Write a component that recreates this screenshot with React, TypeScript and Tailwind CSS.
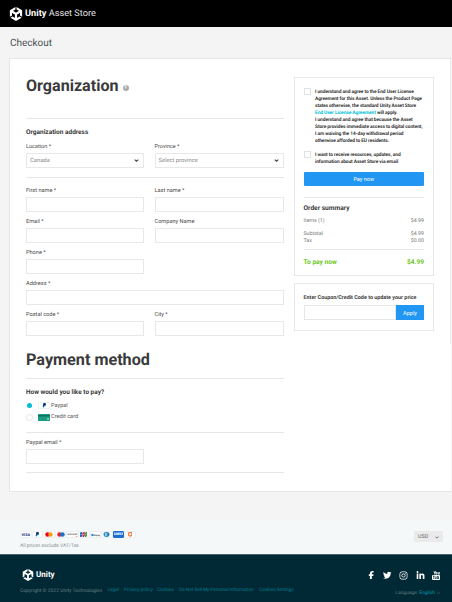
import React from 'react';
import { FaUnity, FaFacebookF, FaTwitter, FaInstagram, FaLinkedinIn } from 'react-icons/fa6';

function Chevron({ className = '' }: { className?: string }) {
  return (
    <svg viewBox="0 0 8 5" className={className} fill="none" stroke="currentColor" strokeWidth="1.8">
      <path d="M1 1l3 2.7L7 1" />
    </svg>
  );
}

function Field({ label, wide = '' }: { label: string; wide?: string }) {
  return (
    <div className={`h-[31px] ${wide}`}>
      <div className="h-3 pt-px text-[5.6px] leading-[11px] text-[#4c4c4c]">{label}</div>
      <div className="h-[15px] border border-[#e8e8e8] bg-white" />
    </div>
  );
}

function SelectField({ label, value }: { label: string; value: string }) {
  return (
    <div>
      <div className="h-[13px] pt-px text-[5.5px] leading-3 text-[#4c4c4c]">{label}</div>
      <div className="flex h-[15px] items-center justify-between border border-[#e8e8e8] pr-1 pl-[3px] text-[5.8px] text-[#888]">
        <span className="pt-px">{value}</span>
        <Chevron className="h-[3px] w-[5px] text-[#444]" />
      </div>
    </div>
  );
}

function Row({ label, price }: { label: string; price: string }) {
  return (
    <div className="flex h-[7px] items-center justify-between text-[5.25px] leading-[7px] text-[#777]">
      <span>{label}</span>
      <span>{price}</span>
    </div>
  );
}

function PayPal({ className = '' }: { className?: string }) {
  return (
    <svg viewBox="0 0 10 12" className={className}>
      <path d="M3 2h4.5c2 .5 2 5-1.5 5.500H4.500L4 11H1.500z" fill="#179bd7" />
      <path d="M2.500 0H6c4 .2 3 6-1 6H3.500L3 9H.5z" fill="#193276" />
    </svg>
  );
}

function Badge({ children, blue = false }: { children: React.ReactNode; blue?: boolean }) {
  return (
    <div className={`flex h-[7px] w-[11.6px] items-center justify-center overflow-hidden rounded-[1px] border ${blue ? 'border-[#1b6fd0] bg-[#1b6fd0]' : 'border-[#edf0f3] bg-white'}`}>
      {children}
    </div>
  );
}

function Circles({ left, right }: { left: string; right: string }) {
  return (
    <svg viewBox="0 0 16 10" className="h-[5px] w-2 shrink-0">
      <circle cx="5" cy="5" r="4.500" fill={left} />
      <circle cx="11" cy="5" r="4.500" fill={right} />
    </svg>
  );
}

function PaymentBadges() {
  return (
    <div className="flex h-[7px] w-[116px]">
      <Badge><span className="text-[3.800px] font-black text-[#273b86] italic">VISA</span></Badge>
      <Badge><PayPal className="h-[5px] w-[5px]" /></Badge>
      <Badge><Circles left="#eb001b" right="#f79e1b" /></Badge>
      <Badge><Circles left="#e32129" right="#1574c4" /></Badge>
      <Badge>
        <svg viewBox="0 0 22 14" className="h-[7px] w-[11px] shrink-0">
          <path d="M9 14c6-1 10-3 13-5v5z" fill="#f47b30" />
          <text x="1" y="8" fontSize="4.200" fontWeight="700" fill="#444" fontFamily="Roboto, sans-serif">DISCOVER</text>
        </svg>
      </Badge>
      <Badge>
        <svg viewBox="0 0 14 10" className="h-[5px] w-[7px]">
          <path d="M2 0h2.500v8l-2 2H0V2z" fill="#176fc1" />
          <path d="M7 0h2.500v8l-2 2H5V2z" fill="#d81f46" />
          <path d="M12 0h2v8l-2 2h-2V2z" fill="#36a044" />
          <path d="M1 5h2M6 5h2M11 5h2" stroke="#fff" />
        </svg>
      </Badge>
      <Badge>
        <svg viewBox="0 0 20 8" className="h-1 w-[10px]">
          <circle cx="3" cy="4" r="2.500" fill="#2784d8" />
          <text x="5" y="6" fontSize="5" fontWeight="700" fill="#34465a" fontFamily="Roboto, sans-serif">Alipay</text>
        </svg>
      </Badge>
      <Badge>
        <svg viewBox="0 0 14 10" className="h-[5px] w-[7px]">
          <ellipse cx="7" cy="5" rx="6" ry="4.800" fill="#1684b8" />
          <circle cx="6" cy="5" r="3.500" fill="#fff" />
          <path d="M5 2v6a3 3 0 010-6zm2 0v6a3 3 0 000-6z" fill="#1684b8" />
        </svg>
      </Badge>
      <Badge blue><span className="text-[3.600px] font-bold text-white">AMEX</span></Badge>
      <Badge>
        <svg viewBox="0 0 8 8" className="size-[4.500px]" fill="none" stroke="#ee7630" strokeWidth="2">
          <rect x="1.200" y="1.200" width="5.600" height="5.600" rx="1.500" />
        </svg>
      </Badge>
    </div>
  );
}

function License() {
  return (
    <aside className="h-[199px] border border-[#e8e8e8] pr-[9px] pl-[8.500px] pt-[10px]">
      <div className="flex h-[63px] gap-[4.500px]">
        <span className="size-[7px] shrink-0 border border-[#dce4e7]" />
        <p className="pt-px text-[4.850px] leading-[7px] font-bold tracking-[-0.080px] whitespace-nowrap text-[#333]">
          I understand and agree to the End User License<br />
          Agreement for this Asset. Unless the Product Page<br />
          states otherwise, the standard Unity Asset Store<br />
          <span className="text-[#00bfd8]">End User License Agreement</span> will apply.<br />
          I understand and agree that because the Asset<br />
          Store provides immediate access to digital content,<br />
          I am waiving the 14-day withdrawal period<br />
          otherwise afforded to EU residents.
        </p>
      </div>
      <div className="flex h-[21px] gap-[4.500px]">
        <span className="size-[7px] shrink-0 border border-[#dce4e7]" />
        <p className="pt-px text-[4.850px] leading-[7px] font-bold tracking-[-0.080px] whitespace-nowrap text-[#333]">
          I want to receive resources, updates, and<br />
          information about Asset Store via email
        </p>
      </div>
      <button className="block h-[14px] w-full rounded-[1px] bg-[#2196f3] text-center text-[5.500px] leading-[15px] text-white">Pay now</button>
      <div className="mt-[11px] border-t border-[#e6e6e6] pt-[6px] text-[6.600px] leading-[9px] font-bold">Order summary</div>
      <div className="mt-[5px]"><Row label="Items (1)" price="$4.99" /></div>
      <div className="mt-[6px]"><Row label="Subtotal" price="$4.99" /><Row label="Tax" price="$0.00" /></div>
      <div className="mt-1 flex justify-between border-t border-[#e6e6e6] pt-2 text-[6.600px] leading-[9px] font-bold text-[#6bc71c]">
        <span>To pay now</span><span>$4.99</span>
      </div>
    </aside>
  );
}

function Coupon() {
  return (
    <aside className="mt-[7px] h-12 border border-[#e8e8e8] pr-[9px] pl-[8.500px] pt-[10px]">
      <div className="h-[11px] text-[5.400px] leading-[8px] font-bold whitespace-nowrap">Enter Coupon/Credit Code to update your price</div>
      <div className="flex h-[15px]">
        <div className="flex-1 border border-[#e6e6e6]" />
        <button className="w-7 bg-[#2196f3] text-[5.600px] leading-[14px] text-white">Apply</button>
      </div>
    </aside>
  );
}

export default function App() {
  return (
    <div className="h-[602px] w-[452px] overflow-hidden bg-[#f4f4f4] font-[Roboto,sans-serif] text-[#3a3a3a] [text-rendering:geometricPrecision]">
      <header className="flex h-[27px] items-center bg-black pl-[9px] text-white">
        <FaUnity className="size-[14px]" />
        <span className="ml-[2px] text-[9.200px] leading-3 whitespace-nowrap"><b>Unity</b> <span className="text-[#e2e2e2]">Asset Store</span></span>
      </header>
      <div className="h-[31px] pt-[9px] pl-[10px] text-[10px] leading-[15px] text-[#4b5258]">Checkout</div>
      <main className="ml-[9px] h-[434px] border border-[#e6e6e6] border-r-transparent bg-white bg-clip-padding">
        <div className="flex">
          <section className="w-[274px] pl-4">
            <div className="flex h-[59px] items-center gap-1 pb-[6px]">
              <h1 className="text-[16.100px] leading-5 font-bold">Organization</h1>
              <span className="mt-[5px] flex size-[6px] items-center justify-center rounded-full bg-[#aaa] text-[5px] leading-none font-bold text-white">?</span>
            </div>
            <div className="h-[59px] border-t border-[#e6e6e6]">
              <h2 className="h-[21px] pt-[9px] text-[6.500px] leading-[9px] font-bold">Organization address</h2>
              <div className="grid grid-cols-[118px_129.500px] gap-[10.500px]">
                <SelectField label="Location *" value="Canada" />
                <SelectField label="Province *" value="Select province" />
              </div>
            </div>
            <div className="grid grid-cols-[118px_129.500px] gap-x-[10.500px] border-t border-[#e6e6e6] pt-[7px]">
              <Field label="First name *" />
              <Field label="Last name *" />
              <Field label="Email *" />
              <Field label="Company Name" />
              <Field label="Phone *" />
              <span />
              <Field label="Address *" wide="col-span-2" />
              <Field label="Postal code *" />
              <Field label="City *" />
            </div>
          </section>
          <div className="ml-[10px] w-[140px] pt-[18px]">
            <License />
            <Coupon />
          </div>
          <div className="ml-auto h-[285px] w-px bg-[#ececec]" />
        </div>
        <section className="ml-4 w-[258px]">
          <h1 className="h-[34px] pt-[5px] text-[16.200px] leading-[21px] font-bold whitespace-nowrap">Payment method</h1>
          <div className="h-[54px] border-t border-[#e6e6e6] pt-[9px]">
            <h2 className="text-[6.450px] leading-[9px] font-bold">How would you like to pay?</h2>
            <div className="mt-[3px] flex h-[11px] items-center pl-px text-[5.600px] text-[#555]">
              <span className="mr-[6px] size-[5px] rounded-full bg-[#00bcd4]" />
              <span className="mr-[1px] flex h-[7px] w-3 items-center justify-center rounded-[1px] border border-[#f0f0f0]"><PayPal className="h-[5px] w-[5px]" /></span>
              <span className="pt-px">Paypal</span>
            </div>
            <div className="flex h-3 items-center text-[5.600px] text-[#555]">
              <span className="mr-[5px] size-[7px] rounded-full border border-[#e5e5e5]" />
              <svg viewBox="0 0 12 7" className="mr-[1px] h-[7px] w-3">
                <rect width="12" height="7" rx=".5" fill="#199d85" />
                <path d="M0 1h12v1.500H0z" fill="#14705f" />
                <path d="M9 5h2" stroke="#d7f0e9" />
              </svg>
              <span className="pt-px">Credit card</span>
            </div>
          </div>
          <div className="border-t border-b border-[#e6e6e6] pt-1">
            <Field label="Paypal email *" wide="w-[118px]" />
            <div className="h-1" />
          </div>
        </section>
      </main>
      <div className="mt-7 flex h-[34px] justify-between bg-[#f4f8f9] pr-[9px] pl-5">
        <div className="pt-[11px]">
          <PaymentBadges />
          <div className="mt-1 text-[5.100px] leading-[9px] tracking-[-0.050px] text-[#8d9294]">All prices exclude VAT/Tax</div>
        </div>
        <div className="mt-[11px] flex h-[11px] w-[29px] items-center justify-between rounded-[1px] bg-[#eaeaea] px-1 pt-px text-[5.400px] text-[#666]">
          USD<Chevron className="h-[3px] w-[4px]" />
        </div>
      </div>
      <footer className="h-12 border-t border-[#48656b] bg-[#002835] pr-3 pl-5">
        <div className="flex h-[31px] items-center justify-between pt-[9px] text-white">
          <div className="flex items-center gap-[2px] pl-[2px]">
            <FaUnity className="size-3" />
            <span className="text-[8px] leading-3 font-bold">Unity</span>
          </div>
          <div className="flex items-center gap-[7.500px]">
            <FaFacebookF className="size-[8.500px]" />
            <FaTwitter className="size-[8.500px]" />
            <FaInstagram className="size-[9px]" />
            <FaLinkedinIn className="size-[9px]" />
            <svg viewBox="0 0 16 18" className="h-[9px] w-2" fill="currentColor">
              <path d="M3 0h1.500l1 3 1-3H8L6.200 4.500V7H4.800V4.500zM9 2c1.800 0 2 1 2 2.500S10.500 7 9 7 7 6 7 4.500 7.300 2 9 2zm0 1.200c-.8 0-.8 2.600 0 2.600s.8-2.600 0-2.600zM11.800 2H13v3.500l1-.5V2h1.300v5H14v-.6c-1 .9-2.200.8-2.200-.6z" />
              <path fillRule="evenodd" d="M2 8h12q2 0 2 2v6q0 2-2 2H2q-2 0-2-2v-6q0-2 2-2zm0 1.500V11h1v5h1.500v-5h1V9.500zM6 11v5h3v-5H8v4H7v-4zm4-1.500V16h4v-5h-3V9.500zM11 12h1.500v3H11z" />
            </svg>
          </div>
        </div>
        <div className="flex h-3 justify-between text-[4.750px] leading-[10px] whitespace-nowrap text-[#667d83]">
          <div className="flex text-[#007f8f]">
            <span className="w-[87.500px] text-[5px] text-[#667d83]">Copyright © 2022 Unity Technologies</span>
            <span className="w-[16.500px]">Legal</span>
            <span className="w-[33px]">Privacy policy</span>
            <span className="w-[22px]">Cookies</span>
            <span className="w-20 tracking-[-0.060px]">Do Not Sell My Personal Information</span>
            <span className="tracking-[-0.060px]">Cookies Settings</span>
          </div>
          <div className="flex items-center pt-[2px] text-[4.900px]">Language:&nbsp;<span className="text-[#009eaf]">English</span><Chevron className="ml-[2px] h-[2.500px] w-[3px]" /></div>
        </div>
      </footer>
    </div>
  );
}
